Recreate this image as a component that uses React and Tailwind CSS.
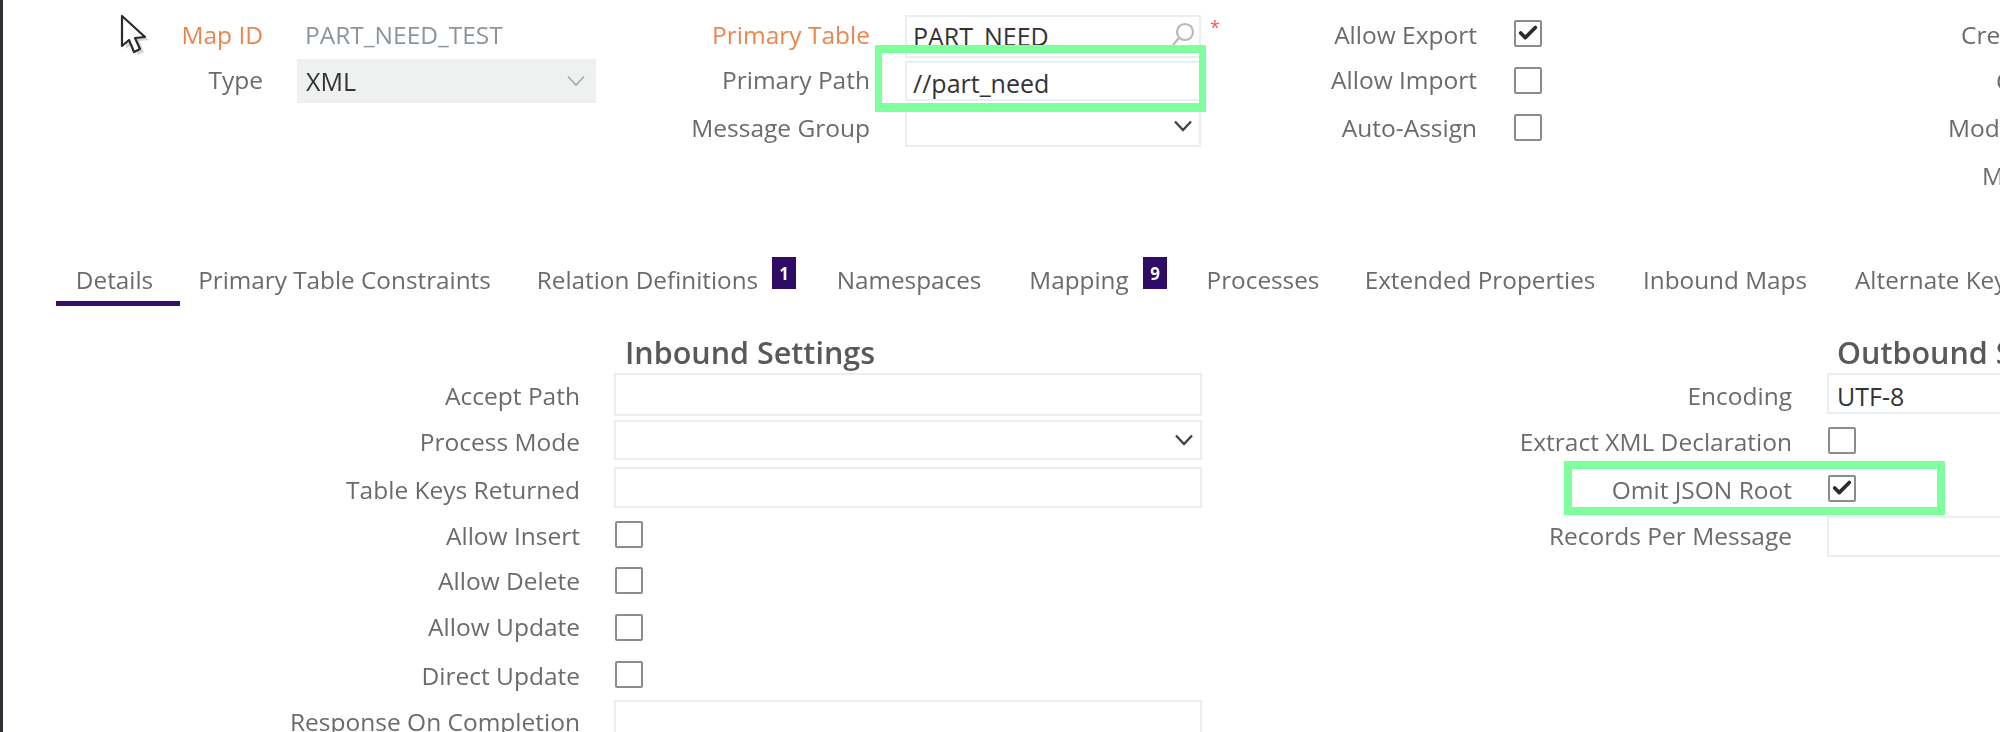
import { Check } from "lucide-react";

const font = "font-['Open_Sans',sans-serif]";

function Label({ orange, children }) {
  return (
    <div className={`text-right whitespace-nowrap text-[24.5px] leading-none ${orange ? "text-[#e9864f]" : "text-[#6b6b6b]"}`}>
      {children}
    </div>
  );
}

function Box({ className = "", children }) {
  return (
    <div className={`relative flex items-center border-2 border-[#e8f0ef] bg-white pl-[6px] text-[25px] leading-none text-[#333] ${className}`}>
      {children}
    </div>
  );
}

function Tick({ checked, className = "" }) {
  return (
    <div className={`flex h-[27px] w-[28px] items-center justify-center rounded-[2px] border-2 border-[#8c8c8c] bg-white ${className}`}>
      {checked && <Check size={22} strokeWidth={4} className="text-[#2b2b2b]" />}
    </div>
  );
}

function Chev({ light }) {
  return (
    <svg width="20" height="12" viewBox="0 0 20 12" fill="none" stroke={light ? "#a8a8a8" : "#444444"} strokeWidth={light ? 1.6 : 2.4}>
      <path d="M2 1.5 L10 10 L18 1.5" />
    </svg>
  );
}

function Tab({ active, className = "", children }) {
  return (
    <div className={`flex h-full shrink-0 items-center justify-center whitespace-nowrap border-b-[5px] pt-[3px] text-[24.3px] leading-none text-[#6b6b6b] ${active ? "border-[#3a0e6e]" : "border-transparent"} ${className}`}>
      {children}
    </div>
  );
}

function Badge({ children }) {
  return (
    <div className="-ml-[14px] mr-[14px] flex h-[32px] w-[24px] shrink-0 items-center justify-center self-start bg-[#2e0b66] text-[17px] leading-none font-bold text-white">
      {children}
    </div>
  );
}

function Cursor() {
  return (
    <svg className="absolute left-[118px] top-[12px]" width="34" height="44" viewBox="0 0 34 44">
      <path d="M6 5 L6 35 L13 29 L18 41 L24 38 L19 27 L29 26 Z" fill="#a9a9a9" opacity="0.5" transform="translate(2 2)" />
      <path d="M4 4 L4 34 L11 28 L16 40 L22 37 L17 26 L27 25 Z" fill="white" stroke="#2a2a2a" strokeWidth="2.2" strokeLinejoin="round" />
    </svg>
  );
}

export default function App() {
  return (
    <div className={`relative h-[732px] w-[2000px] overflow-hidden bg-white ${font}`}>
      <div className="h-[732px] overflow-hidden border-l-[3px] border-[#2c3034] blur-[0.6px]">
        {/* header form */}
        <div className="flex h-[257px] items-start pt-[12px]">
          <div className="grid grid-cols-[260px_299px] grid-rows-[46px_45px] items-center gap-x-[34px]">
            <Label orange>Map ID</Label>
            <div className="pl-[8px] text-[24.5px] leading-none text-[#8b959c]">PART_NEED_TEST</div>
            <Label>Type</Label>
            <div className="flex h-[44px] items-center justify-between bg-[#eef1ef] pl-[9px] pr-[10px] text-[25px] leading-none text-[#333]">
              <span className="pt-[2px]">XML</span>
              <Chev light />
            </div>
          </div>

          <div className="grid grid-cols-[274px_296px] grid-rows-[46px_45px_50px] items-center gap-x-[35px]">
            <Label orange>Primary Table</Label>
            <Box className="h-[43px] self-end">
              <span>PART_NEED</span>
              <svg className="absolute right-[4px] top-[5px]" width="24" height="24" viewBox="0 0 24 24" fill="none" stroke="#b9b9b9" strokeWidth="2.2">
                <circle cx="14" cy="10" r="8" />
                <path d="M8 16 L2 23" />
              </svg>
              <span className="absolute -right-[21px] top-[1px] text-[18px] text-[#ef5a5a]">*</span>
            </Box>
            <Label>Primary Path</Label>
            <Box className="h-[40px] pt-[6px]">//part_need</Box>
            <Label>Message Group</Label>
            <Box className="mt-[2px] h-[42px] justify-end self-start pr-[6px]">
              <Chev />
            </Box>
          </div>

          <div className="grid grid-cols-[276px_28px] grid-rows-[46px_45px_50px] items-center gap-x-[37px]">
            <Label>Allow Export</Label>
            <Tick checked className="mb-[4px]" />
            <Label>Allow Import</Label>
            <Tick />
            <Label>Auto-Assign</Label>
            <Tick className="mb-[2px]" />
          </div>

          <div className="flex flex-col whitespace-nowrap text-[24.5px] leading-[46px] text-[#6b6b6b]">
            <div className="pl-[419px]">Created</div>
            <div className="pl-[454px]">Changed</div>
            <div className="mt-[1px] pl-[406px]">Modified</div>
            <div className="mt-[2px] pl-[440px]">Modified</div>
          </div>
        </div>

        {/* tabs */}
        <div className="flex h-[49px] items-start gap-[7px] pl-[53px]">
          <Tab active className="-mr-[7px] w-[124px] pr-[7px]">Details</Tab>
          <Tab className="w-[329px]">Primary Table Constraints</Tab>
          <Tab className="w-[263px]">Relation Definitions</Tab>
          <Badge>1</Badge>
          <Tab className="w-[184px]">Namespaces</Tab>
          <Tab className="w-[142px]">Mapping</Tab>
          <Badge>9</Badge>
          <Tab className="w-[150px]">Processes</Tab>
          <Tab className="w-[270px]">Extended Properties</Tab>
          <Tab className="w-[206px]">Inbound Maps</Tab>
          <Tab className="pl-[20px]">Alternate Keys</Tab>
        </div>

        {/* settings */}
        <div className="flex">
          <div className="w-[1199px] shrink-0">
            <div className="h-[67px] pl-[622px] pt-[26px] text-[30.5px] leading-[40px] font-semibold text-[#595959]">Inbound Settings</div>
            <div className="grid grid-cols-[577px_588px] grid-rows-[46px_46px_50px_42px_48px_44px_54px_38px] items-center gap-x-[34px]">
              <Label>Accept Path</Label>
              <Box className="h-[43px] self-start" />
              <Label>Process Mode</Label>
              <Box className="mb-[4px] h-[40px] justify-end pr-[6px]">
                <Chev />
              </Box>
              <Label>Table Keys Returned</Label>
              <Box className="mb-[5px] h-[41px]" />
              <Label>Allow Insert</Label>
              <Tick className="mb-[4px] ml-[1px]" />
              <Label>Allow Delete</Label>
              <Tick className="mb-[2px] ml-[1px]" />
              <Label>Allow Update</Label>
              <Tick className="ml-[1px]" />
              <Label>Direct Update</Label>
              <Tick className="mb-[4px] ml-[1px]" />
              <Label>Response On Completion</Label>
              <Box className="-mt-[3px] h-[46px] self-start" />
            </div>
          </div>

          <div className="flex-1">
            <div className="h-[67px] whitespace-nowrap pl-[635px] pt-[26px] text-[30.5px] leading-[40px] font-semibold text-[#595959]">Outbound Settings</div>
            <div className="grid grid-cols-[590px_300px] grid-rows-[46px_46px_50px_42px] items-center gap-x-[35px]">
              <Label>Encoding</Label>
              <Box className="h-[41px] self-start pl-[8px] pt-[5px]">UTF-8</Box>
              <Label>Extract XML Declaration</Label>
              <Tick className="mb-[4px] ml-[1px]" />
              <Label>Omit JSON Root</Label>
              <Tick checked className="mb-[4px] ml-[1px]" />
              <Label>Records Per Message</Label>
              <Box className="h-[41px]" />
            </div>
          </div>
        </div>
      </div>

      {/* annotations on top of the screenshot */}
      <Cursor />
      <div className="absolute left-[875px] top-[45px] h-[67px] w-[331px] border-x-[7px] border-t-[8px] border-b-[9px] border-[#80ff9e]" />
      <div className="absolute left-[1564px] top-[461px] h-[54px] w-[381px] border-[8px] border-[#80ff9e]" />
    </div>
  );
}
